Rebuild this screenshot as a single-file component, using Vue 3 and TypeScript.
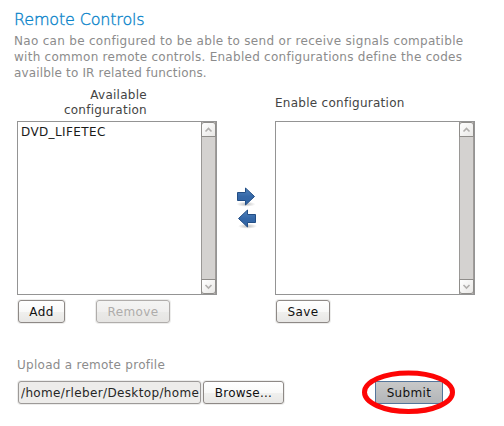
<script setup lang="ts">
import { ref } from 'vue'

interface Panel {
  id: string
  label: string
  items: string[]
  actions: { label: string; disabled: boolean }[]
}

const panels = ref<Panel[]>([
  {
    id: 'available',
    label: 'Available configuration',
    items: ['DVD_LIFETEC'],
    actions: [
      { label: 'Add', disabled: false },
      { label: 'Remove', disabled: true },
    ],
  },
  {
    id: 'enabled',
    label: 'Enable configuration',
    items: [],
    actions: [{ label: 'Save', disabled: false }],
  },
])
const filePath = ref('/home/rleber/Desktop/home')
</script>

<template>
  <main class="page">
    <h1>Remote Controls</h1>
    <p class="intro">
      <span class="first">Nao can be configured to be able to send or receive signals compatible</span>
      <span>with common remote controls. Enabled configurations define the codes</span>
      <span class="last">availble to IR related functions.</span>
    </p>

    <section class="panels">
      <div v-for="panel in panels" :key="panel.id" class="panel" :class="panel.id">
        <div class="label"><span>{{ panel.label }}</span></div>
        <div class="list">
          <ul>
            <li v-for="item in panel.items" :key="item">{{ item }}</li>
          </ul>
          <div class="scrollbar">
            <svg class="step up" viewBox="0 0 13 13"><path d="M3.5 8.5 6.5 5.5 9.5 8.5" /></svg>
            <svg class="step down" viewBox="0 0 13 13"><path d="M3.5 5 6.5 8 9.5 5" /></svg>
          </div>
        </div>
        <div class="actions">
          <button v-for="a in panel.actions" :key="a.label" :class="a.label.toLowerCase()" :disabled="a.disabled">{{ a.label }}</button>
        </div>
      </div>
      <div class="arrows">
        <svg viewBox="0 0 22 22">
          <defs>
            <linearGradient id="blue" x1="0" y1="0" x2="0" y2="1">
              <stop offset="0" stop-color="#4f82bd" />
              <stop offset="0.5" stop-color="#3568a8" />
              <stop offset="1" stop-color="#2f62a2" />
            </linearGradient>
            <radialGradient id="shade">
              <stop offset="0" stop-color="#bbb" />
              <stop offset="1" stop-color="#bbb" stop-opacity="0" />
            </radialGradient>
          </defs>
          <ellipse cx="11" cy="19.2" rx="9.5" ry="2.6" fill="url(#shade)" />
          <path d="M2.5 7.5H10.5V3L19.5 11.5 10.5 20V15.5H2.5Z" fill="url(#blue)" stroke="#234e85" />
        </svg>
        <svg viewBox="0 0 22 22">
          <ellipse cx="12.5" cy="19.2" rx="9.5" ry="2.6" fill="url(#shade)" />
          <path d="M20.5 7.5H12.5V3L3.5 11.5 12.5 20V15.5H20.5Z" fill="url(#blue)" stroke="#234e85" />
        </svg>
      </div>
    </section>

    <section class="upload">
      <div class="caption">Upload a remote profile</div>
      <div class="row">
        <div class="file"><span>{{ filePath }}</span></div>
        <button class="browse">Browse...</button>
        <div class="submit-wrap">
          <button class="submit">Submit</button>
          <svg class="ring" viewBox="0 0 96 46"><ellipse cx="47.5" cy="23.2" rx="44" ry="19.3" /></svg>
        </div>
      </div>
    </section>
  </main>
</template>

<style>
body {
  background: #fff;
}
</style>

<style scoped>
.page {
  box-sizing: border-box;
  width: 504px;
  height: 426px;
  overflow: hidden;
  padding: 10px 0 0 14px;
  font: 12px/16px 'DejaVu Sans', sans-serif;
  letter-spacing: 0.27px;
  color: #444;
  background: #fff;
}
h1 {
  margin: 0;
  font-size: 16px;
  line-height: 20px;
  font-weight: 200;
  letter-spacing: -0.17px;
  color: #0a84ca;
  -webkit-text-stroke: 0.35px #0a84ca;
}
.intro {
  margin: 3px 0 0;
  height: 48px;
  white-space: nowrap;
  color: #8c8c8c;
}
.intro span {
  display: block;
}
.intro .first {
  letter-spacing: 0.3px;
}
.intro .last {
  letter-spacing: 0.16px;
}
.panels {
  display: grid;
  grid-template-columns: 200px 58px 200px;
  margin: 5px 0 0 3px;
}
.panel {
  grid-row: 1;
}
.available {
  grid-column: 1;
}
.enabled {
  grid-column: 3;
}
.label {
  box-sizing: border-box;
  display: flex;
  align-items: center;
  height: 35px;
  line-height: 15px;
}
.available .label {
  justify-content: flex-end;
  padding: 0 70px 2px 0;
  text-align: right;
}
.available .label span {
  width: 100px;
}
.list {
  box-sizing: border-box;
  display: flex;
  justify-content: space-between;
  height: 174px;
  border: 1px solid #949494;
  background: #fff;
}
ul {
  margin: 0;
  padding: 2px 0 0 3px;
  list-style: none;
  letter-spacing: 0.38px;
  color: #1a1a1a;
}
.scrollbar {
  box-sizing: border-box;
  display: flex;
  flex-direction: column;
  justify-content: space-between;
  width: 15px;
  background: #d4d2d0;
  border-left: 1px solid #9a9896;
  border-right: 1px solid #a09c99;
}
.step {
  box-sizing: border-box;
  flex: none;
  width: 15px;
  height: 15px;
  margin-left: -1px;
  border: 1px solid #8f8d8a;
  background: linear-gradient(135deg, #fff, #e9e8e6);
}
.step path {
  fill: none;
  stroke: #b0aeac;
  stroke-width: 1.6;
}
.up {
  border-radius: 3px 3px 0 0;
}
.down {
  border-radius: 0 0 3px 3px;
}
.actions {
  display: flex;
  padding: 5px 0 0 1px;
  gap: 31px;
}
button {
  box-sizing: border-box;
  height: 23px;
  padding: 0;
  border: 1px solid #8e8986;
  border-radius: 3px;
  background: linear-gradient(#fff 0%, #f9f9f8 50%, #f0f0ee 52%, #e8e7e5 100%);
  box-shadow: 0 0 0 1px #ededec;
  font: inherit;
  letter-spacing: 0.35px;
  color: #111;
}
.add {
  width: 47px;
}
.remove {
  width: 74px;
}
.save {
  width: 54px;
}
button:disabled {
  border-color: #b0adab;
  background: linear-gradient(#f4f4f3 0%, #f0efee 50%, #eaeae8 52%, #e6e5e3 100%);
  color: #aeacaa;
}
.arrows {
  grid-row: 1;
  grid-column: 2;
  display: flex;
  flex-direction: column;
  align-items: center;
  padding-top: 99px;
}
.arrows svg {
  width: 22px;
  height: 22px;
}
.upload {
  margin: 34px 0 0 3px;
}
.caption {
  color: #8c8c8c;
}
.row {
  display: flex;
  margin-top: 8px;
  padding-left: 1px;
}
.file {
  box-sizing: border-box;
  width: 183px;
  height: 23px;
  padding: 0 1px 0 2px;
  border: 1px solid #9d9a98;
  border-radius: 3px;
  background: #edecea;
  box-shadow: 0 0 0 1px #ededec;
  line-height: 22px;
  letter-spacing: 0.36px;
  color: #262626;
}
.file span {
  display: block;
  overflow: hidden;
  white-space: nowrap;
}
.browse {
  width: 81px;
  margin-left: 2px;
  letter-spacing: 0.25px;
}
.submit-wrap {
  position: relative;
  margin-left: 91px;
}
.submit {
  display: block;
  width: 68px;
  border-color: #55769b;
  border-radius: 0;
  background: linear-gradient(#c8c8c8, #b2b5b8);
  box-shadow: none;
}
.ring {
  position: absolute;
  left: -14px;
  top: -12px;
  width: 96px;
  height: 46px;
}
.ring ellipse {
  fill: none;
  stroke: #fd0505;
  stroke-width: 5;
}
</style>
